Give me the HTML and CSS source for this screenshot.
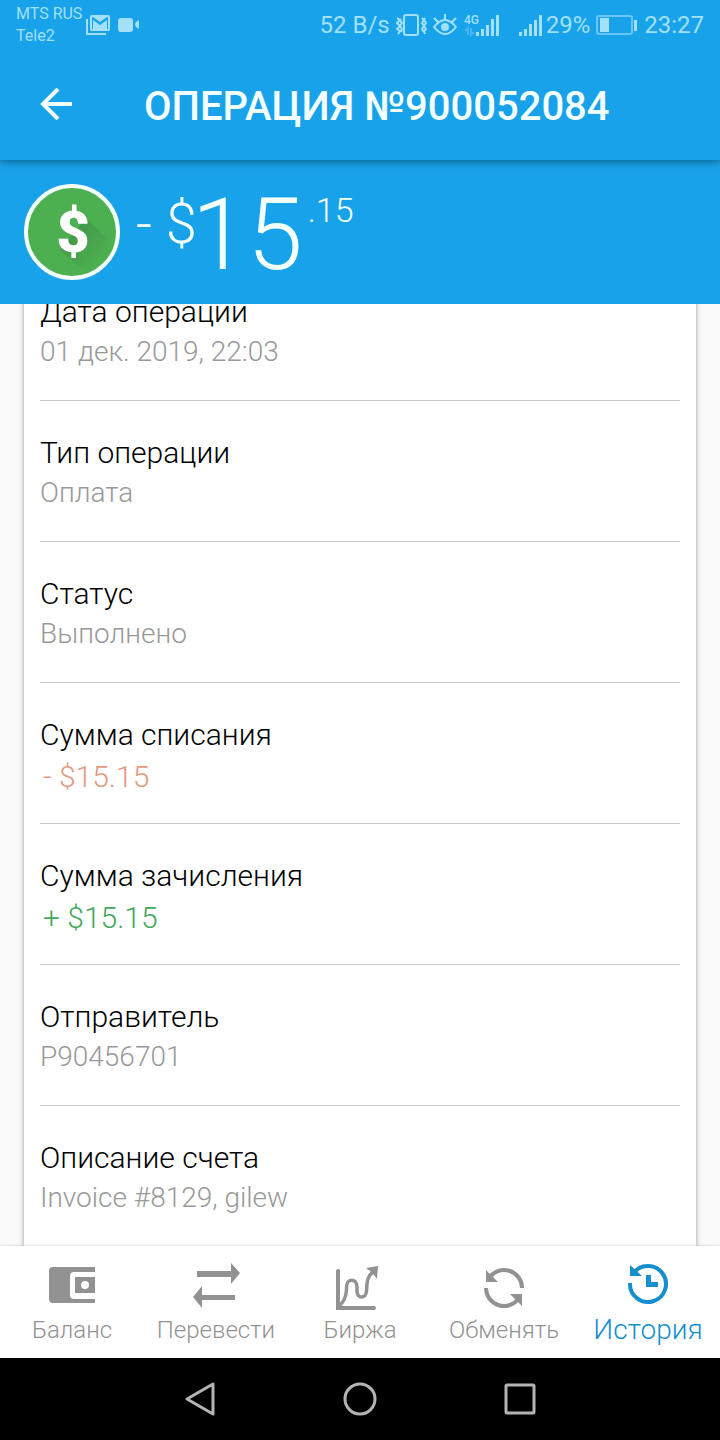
FILE: index.html
```html
<!DOCTYPE html>
<html lang="ru">
<head>
    <meta charset="UTF-8">
    <meta name="viewport" content="width=device-width, initial-scale=1">
    <title>Операция №900052084</title>
    <link rel="stylesheet" href="styles.css">
</head>
<body>
    <div class="status-bar">
        <div class="carrier">
            <span>MTS RUS</span>
            <span>Tele2</span>
        </div>
        <svg class="status-icon" width="56" height="24" viewBox="0 0 56 24">
            <path d="M1 7v15h19" fill="none" stroke="currentColor" stroke-width="2"/>
            <path fill="currentColor" fill-rule="evenodd" d="M6 3h16a2 2 0 0 1 2 2v12a2 2 0 0 1-2 2H6a2 2 0 0 1-2-2V5a2 2 0 0 1 2-2zM6 5v12h1V8l7 5 7-5v9h1V5h-1l-7 5-7-5z"/>
            <rect x="32" y="6" width="15" height="14" rx="3" fill="currentColor"/>
            <path d="M53 8v9l-3-2q-2-3 0-5z" fill="currentColor"/>
        </svg>
        <div class="status-right">
            <span>52 B/s</span>
            <svg class="status-icon" width="108" height="24" viewBox="0 0 108 24">
                <g fill="none" stroke="currentColor" stroke-width="2">
                    <rect x="8" y="2" width="14" height="20" rx="2"/>
                    <path d="M1 5l3 2-3 3 3 3-3 3 3 2-2 3M5 6l-1 2 2 2-2 3 2 3-1 3M26 5l2 2-2 3 2 3-2 3 2 3M29 5l-1 2 2 3-2 3 2 3-2 2 1 3"/>
                    <path d="M38 14q11-14 22 0-11 14-22 0zM38 5l4 4M49 1v6M60 5l-4 4"/>
                </g>
                <circle cx="49" cy="14" r="4" fill="currentColor"/>
                <text x="68" y="11" class="network">4G</text>
                <path d="M72 22v-7l-3 3M75 15v7l3-3" fill="none" stroke="currentColor" stroke-width="2" opacity=".35"/>
                <path d="M80 19h3v4h-3zM85 16h3v7h-3zM90 12h3v11h-3zM95 6h3v17h-3zM100 2h3v21h-3z" fill="currentColor"/>
            </svg>
            <svg class="status-icon signal" width="36" height="24" viewBox="0 0 36 24">
                <path d="M11 19h3v4h-3zM16 16h3v7h-3zM21 11h3v12h-3zM26 7h3v16h-3zM31 2h3v21h-3z" fill="currentColor"/>
            </svg>
            <span>29%</span>
            <svg class="status-icon battery" width="42" height="24" viewBox="0 0 42 24">
                <rect x="1" y="3" width="35" height="18" rx="2" fill="none" stroke="currentColor" stroke-width="2" opacity=".6"/>
                <path d="M4 5h9v14H4zM38 7h3v11h-3z" fill="currentColor"/>
            </svg>
            <span>23:27</span>
        </div>
    </div>

    <header class="toolbar">
        <button class="back" type="button" aria-label="Назад">
            <svg width="32" height="32" viewBox="0 0 32 32" fill="none" stroke="currentColor" stroke-width="4">
                <path d="M32 16H3M18 1L3 16l15 15"/>
            </svg>
        </button>
        <h1>ОПЕРАЦИЯ №900052084</h1>
    </header>

    <section class="amount">
        <svg class="coin" width="96" height="96" viewBox="0 0 96 96">
            <defs>
                <linearGradient id="shade" gradientUnits="userSpaceOnUse" x1="48" y1="48" x2="76" y2="76">
                    <stop offset="0" stop-color="#43994a"/>
                    <stop offset="1" stop-color="#4caf50"/>
                </linearGradient>
            </defs>
            <circle cx="48" cy="48" r="46" fill="#4caf50"/>
            <path d="M62 34L91 63A46 46 0 0 1 65 91L36 66z" fill="url(#shade)"/>
            <circle cx="48" cy="48" r="46" fill="none" stroke="#f2fffb" stroke-width="4"/>
            <text x="49" y="68" class="coin-sign">$</text>
        </svg>
        <p class="sum"><span class="currency">- $</span><span class="whole">15</span><span class="cents">.15</span></p>
    </section>

    <main class="content">
        <dl class="details">
            <div class="row">
                <dt>Дата операции</dt>
                <dd>01 дек. 2019, 22:03</dd>
            </div>
            <div class="row">
                <dt>Тип операции</dt>
                <dd>Оплата</dd>
            </div>
            <div class="row">
                <dt>Статус</dt>
                <dd>Выполнено</dd>
            </div>
            <div class="row">
                <dt>Сумма списания</dt>
                <dd class="money debit">- $15.15</dd>
            </div>
            <div class="row">
                <dt>Сумма зачисления</dt>
                <dd class="money credit">+ $15.15</dd>
            </div>
            <div class="row">
                <dt>Отправитель</dt>
                <dd>P90456701</dd>
            </div>
            <div class="row">
                <dt>Описание счета</dt>
                <dd>Invoice #8129, gilew</dd>
            </div>
        </dl>
    </main>

    <nav class="tabs">
        <a href="#balance">
            <svg width="48" height="48" viewBox="0 0 48 48" fill="currentColor">
                <path d="M5 5h42v5H26q-4 0-4 4v19q0 4 4 4h21v4H5q-4 0-4-4V9q0-4 4-4z"/>
                <path fill-rule="evenodd" d="M27 15h20v16H27zM37 19a4 4 0 1 0 0 8 4 4 0 0 0 0-8z"/>
            </svg>
            <span>Баланс</span>
        </a>
        <a href="#transfer">
            <svg width="48" height="48" viewBox="0 0 48 48" fill="currentColor">
                <path d="M5 9h34V1l9 10-9 11v-7H5zM43 38H10v8L1 35l9-11v9h33z"/>
            </svg>
            <span>Перевести</span>
        </a>
        <a href="#market">
            <svg width="48" height="48" viewBox="0 0 48 48" fill="none" stroke="currentColor" stroke-width="4" stroke-linecap="round">
                <path d="M2 9v37h36"/>
                <path d="M3 44C8 40 10 35 10.500 28V25C10.500 16 21 16 21 25V29C21 37 30 37 30.500 29C31 20 31 14 38 9" stroke-width="3.500" stroke-linecap="butt"/>
                <path d="M42 4L30 6l4 3 4 4 3 4z" fill="currentColor" stroke="none"/>
            </svg>
            <span>Биржа</span>
        </a>
        <a href="#exchange">
            <svg width="48" height="48" viewBox="0 0 48 48" fill="none" stroke="currentColor" stroke-width="4">
                <path d="M9 16A18 18 0 0 1 42 26M6 26A18 18 0 0 0 39 36"/>
                <path d="M6 8v12h12zM42 44V32H30z" fill="currentColor" stroke="none"/>
            </svg>
            <span>Обменять</span>
        </a>
        <a href="#history" class="active">
            <svg width="48" height="48" viewBox="0 0 48 48" fill="none" stroke="currentColor" stroke-width="4">
                <path d="M9 12A18 18 0 1 1 6 21"/>
                <path d="M6 3v11h12zM22 13h5v7h7v5H22z" fill="currentColor" stroke="none"/>
            </svg>
            <span>История</span>
        </a>
    </nav>

    <div class="system-nav">
        <button type="button" aria-label="Назад">
            <svg width="36" height="36" viewBox="0 0 36 36"><path d="M5 18L31 3v30z"/></svg>
        </button>
        <button type="button" aria-label="Домой">
            <svg width="36" height="36" viewBox="0 0 36 36"><circle cx="18" cy="18" r="15"/></svg>
        </button>
        <button type="button" aria-label="Недавние">
            <svg width="36" height="36" viewBox="0 0 36 36"><rect x="4" y="4" width="28" height="28" rx="1"/></svg>
        </button>
    </div>
</body>
</html>
```
FILE: styles.css
```css
* {
    box-sizing: border-box;
}
body {
    margin: 0;
    height: 100vh;
    display: flex;
    flex-direction: column;
    overflow: hidden;
    font-family: Roboto, "Noto Sans", sans-serif;
    font-weight: 300;
    background: #fafafa;
}
svg {
    display: block;
    flex: none;
}
button {
    padding: 0;
    border: none;
    background: none;
    color: inherit;
    cursor: pointer;
}

/* Phone status bar */
.status-bar {
    position: relative;
    z-index: 2;
    height: 48px;
    padding: 0 16px;
    display: flex;
    align-items: center;
    background: #18a2ea;
    color: #a2e0fc;
    font-size: 24px;
    font-weight: 400;
}
.carrier {
    display: flex;
    flex-direction: column;
    margin-right: 4px;
    padding-top: 2px;
    font-size: 16px;
    line-height: 22px;
}
.status-right {
    display: flex;
    align-items: center;
    margin-left: auto;
    padding-top: 2px;
}
.status-right .status-icon {
    margin-left: 6px;
}
.status-right .signal {
    margin: 0 2px 0 4px;
}
.status-right .battery {
    margin-right: 6px;
}
.network {
    font-size: 12px;
    font-weight: 500;
    fill: currentColor;
}

/* Title */
.toolbar {
    position: relative;
    z-index: 1;
    height: 112px;
    padding: 0 40px;
    display: flex;
    align-items: center;
    background: #18a2ea;
    color: #f4ffff;
    box-shadow: 0 2px 8px rgba(0, 0, 0, 0.4);
}
.back {
    margin-right: 72px;
}
.toolbar h1 {
    margin: 0;
    padding-top: 6px;
    font-size: 40px;
    line-height: 48px;
    font-weight: 500;
    white-space: nowrap;
}

/* Amount */
.amount {
    height: 144px;
    padding: 0 24px;
    display: flex;
    align-items: center;
    background: #18a2ea;
    color: #f4ffff;
}
.coin-sign {
    font-size: 58px;
    font-weight: 900;
    text-anchor: middle;
    fill: #fff;
}
.sum {
    margin: 0 0 0 16px;
    padding-top: 6px;
    display: flex;
    align-items: flex-start;
}
.currency {
    font-size: 56px;
    line-height: 76px;
}
.whole {
    margin-left: -5px;
    font-size: 100px;
    line-height: 98px;
}
.cents {
    margin-left: 5px;
    font-size: 34px;
    line-height: 48px;
}

/* Operation details */
.content {
    flex: 1;
    min-height: 0;
    padding: 0 24px;
    overflow: hidden;
}
.details {
    margin: -44px 0 0;
    padding: 0 16px;
    background: #fff;
    box-shadow: 0 0 5px rgba(0, 0, 0, 0.4);
}
.row {
    height: 141px;
    padding-top: 32px;
    border-bottom: 1px solid #c8c8c8;
}
.row dt {
    font-size: 30px;
    line-height: 40px;
    color: #000;
}
.row dd {
    margin: 0;
    font-size: 28px;
    line-height: 40px;
    color: #999;
}
.row .money {
    padding-left: 3px;
    font-size: 30px;
    line-height: 44px;
}
.row .debit {
    color: #e39a80;
}
.row .credit {
    color: #43a85c;
}

/* Bottom tabs */
.tabs {
    position: relative;
    height: 112px;
    display: grid;
    grid-template-columns: repeat(5, 1fr);
    background: #fff;
    box-shadow: 0 0 3px rgba(0, 0, 0, 0.2);
}
.tabs a {
    padding-top: 16px;
    display: flex;
    flex-direction: column;
    align-items: center;
    gap: 4px;
    font-size: 24px;
    line-height: 32px;
    color: #929292;
    text-decoration: none;
}
.tabs .active {
    font-size: 28px;
    color: #1590cc;
}

/* Android navigation buttons */
.system-nav {
    height: 82px;
    padding: 0 120px;
    display: grid;
    grid-template-columns: repeat(3, 1fr);
    justify-items: center;
    align-items: center;
    background: #000;
}
.system-nav svg {
    fill: none;
    stroke: #b4b4b4;
    stroke-width: 3;
    stroke-linejoin: round;
}
```
